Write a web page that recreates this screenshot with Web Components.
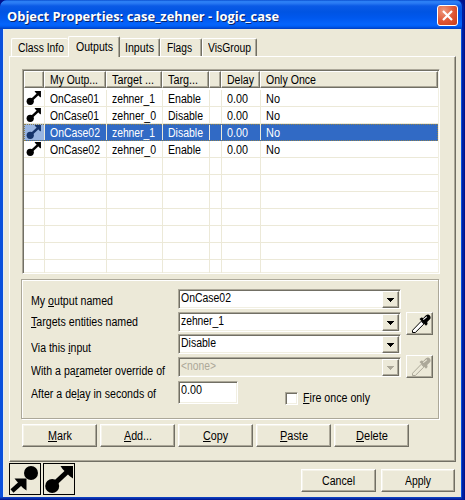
<!DOCTYPE html>
<html lang="en"><head><meta charset="utf-8"><title>Object Properties</title>
<style>
html,body{margin:0;width:465px;height:500px;overflow:hidden;background:#00128c}
body{font:12px "Liberation Sans",Arial,sans-serif;color:#000}
</style></head><body>
<props-window></props-window>
<script>
const define=(name,html,init)=>customElements.define(name,class extends HTMLElement{
  connectedCallback(){
    if(this.shadowRoot)return;
    const t=document.createElement('template');
    t.innerHTML='<style>*{box-sizing:border-box}:host{box-sizing:border-box;display:block}</style>'+(typeof html==='function'?html(this):html);
    this.attachShadow({mode:'open'}).append(t.content.cloneNode(true));
    if(init)init(this);
  }
});
const ARROW='<path d="M8 22 23 8" stroke="currentColor" stroke-width="5"/><circle cx="8.2" cy="22" r="7" fill="currentColor"/><path d="M16.5 2H29v12.5l-3.5-2.5-7-7z" fill="currentColor"/>';

/* Text run condensed horizontally to a fixed advance width (attribute w) */
define('ui-text','<style>:host{display:inline-block;white-space:pre;line-height:14px}span{display:inline-block;transform-origin:0 0}</style><span><slot></slot></span>',h=>{
  const w=+h.getAttribute('w'),s=h.shadowRoot.querySelector('span');
  if(w){const r=s.getBoundingClientRect().width;h.style.width=w+'px';s.style.transform='scaleX('+(w/r).toFixed(4)+')';}
});

define('ui-button','<style>:host{height:23px;display:flex;align-items:center;justify-content:center;background:#ece9d8;border:1px solid;border-color:#fff #716f64 #716f64 #fff;box-shadow:inset -1px -1px #aca899,inset 1px 1px #f5f3e9}</style><slot></slot>');

define('ui-tab','<style>:host{height:18px;padding:2px 0 0 6px;border:1px solid;border-color:#fff #716f64 transparent #fff;border-bottom:0;border-radius:2px 2px 0 0;box-shadow:inset -1px 0 #aca899;background:#ece9d8}:host([active]){height:21px;margin-bottom:-1px;padding:3px 0 0 7px;z-index:1}:host([flat]){border-right:0;box-shadow:none}</style><slot></slot>');

define('ui-combo',h=>`<style>:host{width:223px;height:20px;display:flex;background:#fff;border:1px solid;border-color:#aca899 #fff #fff #aca899;box-shadow:inset 1px 1px #716f64,inset -1px -1px #f1efe2;padding:2px 1px 1px 2px}
:host([disabled]){background:#ece9d8;color:#aca899}
.v{flex:1;margin-top:-1px}.b{width:17px;height:17px;margin-top:-1px;background:#ece9d8;border:1px solid;border-color:#fff #716f64 #716f64 #fff;box-shadow:inset -1px -1px #aca899;display:flex;align-items:center;justify-content:center}
svg{display:block}</style><div class="v"><slot></slot></div><div class="b"><svg width="7" height="4" shape-rendering="crispEdges"><path d="M0 0h7v1H0zM1 1h5v1H1zM2 2h3v1H2zM3 3h1v1H3z" fill="currentColor"/></svg></div>`);

define('ui-picker',h=>{const off=h.hasAttribute('disabled'),c=off?'#aca899':'#000',f=off?'#ece9d8':'#fff';
 return `<style>:host{width:27px;height:23px;display:flex;align-items:center;justify-content:center;border:1px solid;border-color:#fff #716f64 #716f64 #fff;box-shadow:inset -1px -1px #aca899}svg{display:block;margin:0 0 0 2px}</style>
<svg width="20" height="20" viewBox="0 0 20 20"><path d="M1.5 18.5v-2.2L10.2 7.3l2.7 2.7-8.6 8.5z" fill="${f}" stroke="${c}" stroke-width="1"/><path d="M8.5 5 10.3 3.6 12.3 4 15 1.3q2.3-1.5 3.8.2t.2 3.8L16.2 8l.4 2-1.6 1.8z" fill="${c}"/><path d="m12.3 5.6 3.6-3" stroke="${f}" stroke-width="1.2"/></svg>`;});

define('io-badge',h=>`<style>:host{width:32px;height:32px;border:1px solid #000;background:#ece9d8}svg{display:block}</style><svg width="30" height="30" viewBox="0 0 30 30">${h.getAttribute('kind')==='in'?
'<circle cx="21" cy="9" r="7" fill="#000"/><path d="M2 27 12 18" stroke="#000" stroke-width="4.5"/><path d="M4.5 14.5H16.5V26.5L13 24 7 17.5z" fill="#000"/>':ARROW}</svg>`);

const COLS='21px 62px 56px 47px 12px 39px 1fr';
define('list-row',`<style>:host{height:17px;display:grid;grid-template-columns:${COLS};border-bottom:1px solid #ece9d8}
.c{border-right:1px solid #ece9d8;padding:2px 0 0 5px;white-space:nowrap}.c:last-child{border:0}
.c.i{padding:0 0 0 2px;color:#000}svg{display:block}
:host([selected]) .c:not(.i){background:#316ac5;color:#fff}:host([selected]){outline:1px dotted #8d8150;outline-offset:-1px;border-bottom-color:#316ac5}:host([selected]) .i{background:#98b5e2;color:#16356c}</style>
<div class="c i"></div><div class="c"><slot name="a"></slot></div><div class="c"><slot name="b"></slot></div><div class="c"><slot name="d"></slot></div><div class="c"></div><div class="c"><slot name="e"></slot></div><div class="c"><slot name="f"></slot></div>`,h=>{
 if(h.children.length)h.shadowRoot.querySelector('.i').innerHTML=`<svg width="16" height="16" viewBox="0 0 31 31">${ARROW}</svg>`;});

define('output-list',()=>{
 const rows=[['OnCase01','zehner_1','Enable'],['OnCase01','zehner_0','Disable'],['OnCase02','zehner_1','Disable'],['OnCase02','zehner_0','Enable']];
 const W={OnCase01:49,OnCase02:50,zehner_1:43,zehner_0:44,Enable:33,Disable:35};
 const t=(s,slot,w)=>`<ui-text slot="${slot}" w="${w}">${s}</ui-text>`;
 return `<style>:host{width:418px;height:205px;background:#fff;border:1px solid;border-color:#aca899 #fff #fff #aca899;box-shadow:inset 1px 1px #716f64,inset -1px -1px #f1efe2;padding:1px;overflow:hidden}
 .h{height:17px;display:grid;grid-template-columns:20px 62px 56px 47px 12px 35px 1fr;margin-bottom:2px}
 .h{grid-template-columns:20px 62px 56px 47px 12px 39px 1fr}
 .h div{background:#ece9d8;border:1px solid;border-color:#fff #716f64 #716f64 #fff;box-shadow:inset -1px -1px #aca899;padding:1px 0 0 5px;white-space:nowrap}</style>
 <div class="h"><div></div><div><ui-text w="48">My Outp...</ui-text></div><div><ui-text w="42">Target ...</ui-text></div><div><ui-text w="30">Targ...</ui-text></div><div></div><div><ui-text w="27">Delay</ui-text></div><div><ui-text w="50">Only Once</ui-text></div></div>
 ${rows.map((r,i)=>`<list-row ${i==2?'selected':''}>${t(r[0],'a',W[r[0]])}${t(r[1],'b',W[r[1]])}${t(r[2],'d',W[r[2]])}${t('0.00','e',21)}${t('No','f',14)}</list-row>`).join('')}${'<list-row></list-row>'.repeat(7)}`;});

define('output-form',`<style>:host{width:418px;height:140px;border:1px solid #aca899;box-shadow:inset 1px 1px #fff,1px 1px #fff;display:flex;padding:9px 0 0 9px}
.l{width:147px}.l ui-text{display:block;height:14px}.f{width:223px}.p{margin-left:5px}
.e{width:60px;height:23px;background:#fff;border:1px solid;border-color:#aca899 #fff #fff #aca899;box-shadow:inset 1px 1px #716f64,inset -1px -1px #f1efe2;padding:1px 0 0 2px}
.r{display:flex;margin-top:4px}.k{width:13px;height:13px;background:#fff;border:1px solid;border-color:#aca899 #fff #fff #aca899;box-shadow:inset 1px 1px #716f64,inset -1px -1px #f1efe2;margin:11px 5px 0 47px}</style>
<div class="l"><ui-text w="82" style="margin-top:5px">My <u>o</u>utput named</ui-text><ui-text w="107" style="margin-top:7px"><u>T</u>argets entities named</ui-text><ui-text w="60" style="margin-top:12px">Via this <u>i</u>nput</ui-text><ui-text w="134" style="margin-top:9px">With a pa<u>r</u>ameter override of</ui-text><ui-text w="125" style="margin-top:9px">After a de<u>l</u>ay in seconds of</ui-text></div>
<div class="f"><ui-combo><ui-text w="50">OnCase02</ui-text></ui-combo><ui-combo style="margin-top:3px"><ui-text w="43">zehner_1</ui-text></ui-combo><ui-combo style="margin-top:2px"><ui-text w="35">Disable</ui-text></ui-combo><ui-combo disabled style="margin-top:3px"><ui-text w="35">&lt;none&gt;</ui-text></ui-combo>
<div class="r"><div class="e"><ui-text w="21">0.00</ui-text></div><div class="k"></div><ui-text w="67" style="margin-top:10px"><u>F</u>ire once only</ui-text></div></div>
<div class="p"><ui-picker style="margin-top:23px"></ui-picker><ui-picker disabled style="margin-top:20px"></ui-picker></div>`);

define('title-bar',`<style>:host{height:29px;background:linear-gradient(#003fc4 0,#2b80f5 1px,#2b7cf4 3px,#0a5ae6 6px,#0054e3 12px,#0058ee 18px,#0564fb 24px,#0060f8 26px,#003fc2 29px);border-radius:7px 7px 0 0;display:flex;justify-content:space-between;padding:5px 4px 0 7px;font:bold 13px "Open Sans","Noto Sans",sans-serif;color:#fff;text-shadow:1px 1px #0a246a}
ui-text{line-height:22px}.x{width:21px;height:21px;border:1px solid #fff;border-radius:3px;background:radial-gradient(circle at 30% 25%,#ee997d,#df5533 55%,#c83c17)}svg{display:block}</style>
<ui-text w="272">Object Properties: case_zehner - logic_case</ui-text><div class="x"><svg width="19" height="19"><path d="m5 5 9 9M14 5l-9 9" stroke="#fff" stroke-width="2.2"/></svg></div>`);

define('props-window',`<style>:host{width:464px;height:500px;background:#0a50dc;border-radius:7px 7px 0 0;overflow:hidden}
.body{margin:0 3px;height:468px;background:#ece9d8;padding:7px 6px 0;border-left:1px solid #e3ecf3;padding-left:5px}
.edge{height:3px;background:linear-gradient(#1048c8,#00138c)}
:host{border-right:2px solid #001ea0}.body{margin-right:1px}
.tabs{display:flex;align-items:flex-end;height:20px;padding-left:2px}
.panel{width:447px;height:406px;border:1px solid;border-color:#fff #716f64 #716f64 #fff;box-shadow:inset -1px -1px #aca899;padding:12px 0 0 12px}
output-form{margin:5px 0 0 -1px}.btns{display:flex;gap:3px;margin-top:5px}.btns ui-button{width:75px}
.foot{display:flex;gap:2px;margin-top:1px}.foot ui-button{width:75px;margin-top:6px}</style>
<title-bar></title-bar>
<div class="body"><div class="tabs"><ui-tab flat style="width:57px"><ui-text w="46">Class Info</ui-text></ui-tab><ui-tab active style="width:52px"><ui-text w="37">Outputs</ui-text></ui-tab><ui-tab style="width:40px;border-left:0;padding-left:5px"><ui-text w="29">Inputs</ui-text></ui-tab><ui-tab style="width:42px"><ui-text w="25">Flags</ui-text></ui-tab><ui-tab style="width:55px;padding-left:5px"><ui-text w="43">VisGroup</ui-text></ui-tab></div>
<div class="panel"><output-list></output-list><output-form></output-form>
<div class="btns"><ui-button><ui-text w="24"><u>M</u>ark</ui-text></ui-button><ui-button><ui-text w="28"><u>A</u>dd...</ui-text></ui-button><ui-button><ui-text w="25"><u>C</u>opy</ui-text></ui-button><ui-button><ui-text w="28"><u>P</u>aste</ui-text></ui-button><ui-button><ui-text w="32"><u>D</u>elete</ui-text></ui-button></div></div>
<div class="foot"><io-badge kind="in"></io-badge><io-badge kind="out"></io-badge><ui-button style="margin-left:224px"><ui-text w="33">Cancel</ui-text></ui-button><ui-button style="margin-left:3px"><ui-text w="26">Apply</ui-text></ui-button></div></div>
<div class="edge"></div>`);
</script></body></html>
